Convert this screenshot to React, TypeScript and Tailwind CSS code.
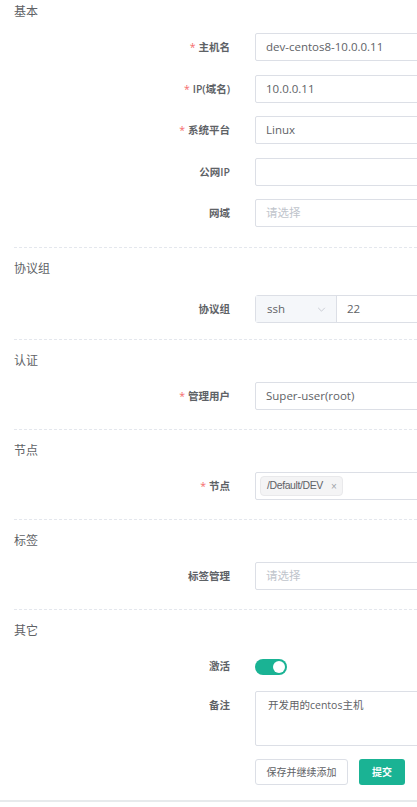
import { ReactNode } from 'react';

const font = { fontFamily: '"Open Sans", "Noto Sans CJK SC", sans-serif' };

const Label = ({ text, required }: { text: string; required?: boolean }) => (
  <div className="w-[230px] shrink-0 text-right text-[10.5px] font-semibold text-[#5e6266] leading-[28px]">
    {required && <span className="text-[#f56c6c] mr-[3px] font-normal">*</span>}
    {text}
  </div>
);

const Row = ({ label, required, children }: { label: string; required?: boolean; children: ReactNode }) => (
  <div className="flex items-start">
    <Label text={label} required={required} />
    <div className="ml-[25px] w-[400px] shrink-0">{children}</div>
  </div>
);

const Input = ({ value, placeholder }: { value?: string; placeholder?: string }) => (
  <div className="h-[28px] border border-[#dcdfe6] rounded-[2px] px-[10px] text-[11.5px] leading-[26px] bg-white">
    {value ? (
      <span className="text-[#606266]">{value}</span>
    ) : (
      <span className="text-[#c0c4cc]">{placeholder}</span>
    )}
  </div>
);

const Section = ({ title, first, children }: { title: string; first?: boolean; children: ReactNode }) => (
  <section className={first ? 'pt-[2px] pb-[20px]' : 'ml-[14px] border-t border-dashed border-[#e4e7ed] pt-[11px] pb-[19px]'}>
    <h3 className={`${first ? 'pl-[14px]' : '-ml-[14px] pl-[14px]'} h-[20px] leading-[20px] text-[12px] text-[#606266]`}>{title}</h3>
    <div className={`${first ? '' : '-ml-[14px]'} mt-[11px] flex flex-col gap-[13.5px]`}>{children}</div>
  </section>
);

export default function App() {
  return (
    <div className="w-[417px] h-[807px] overflow-hidden bg-white" style={font}>
      <Section title="基本" first>
        <Row label="主机名" required><Input value="dev-centos8-10.0.0.11" /></Row>
        <Row label="IP(域名)" required><Input value="10.0.0.11" /></Row>
        <Row label="系统平台" required><Input value="Linux" /></Row>
        <Row label="公网IP"><Input /></Row>
        <Row label="网域"><Input placeholder="请选择" /></Row>
      </Section>

      <Section title="协议组">
        <div className="mt-[5px] -mb-[3px]">
          <Row label="协议组">
            <div className="flex h-[28px] border border-[#dcdfe6] rounded-[3px] text-[11.5px] text-[#606266]">
              <div className="w-[81px] bg-[#f5f7fa] border-r border-[#dcdfe6] flex items-center justify-between pl-[11px] pr-[10px]">
                <span>ssh</span>
                <svg width="9" height="5" viewBox="0 0 10 6" fill="none" stroke="#c0c4cc" strokeWidth="1">
                  <path d="M1 1l4 4 4-4" />
                </svg>
              </div>
              <div className="flex items-center pl-[10px]">22</div>
            </div>
          </Row>
        </div>
      </Section>

      <Section title="认证">
        <Row label="管理用户" required><Input value="Super-user(root)" /></Row>
      </Section>

      <Section title="节点">
        <Row label="节点" required>
          <div className="h-[28px] border border-[#dcdfe6] rounded-[2px] flex items-center pl-[4px]">
            <span
              className="h-[20px] px-[6px] bg-[#f4f4f5] border border-[#e9e9eb] rounded-[4px] text-[10.5px] text-[#606266] flex items-center gap-[8px]"
              style={{ fontFamily: '"Liberation Sans", sans-serif', letterSpacing: '-0.4px' }}
            >
              /Default/DEV
              <span className="text-[#a0a3a8] text-[10px]">×</span>
            </span>
          </div>
        </Row>
      </Section>

      <Section title="标签">
        <Row label="标签管理"><Input placeholder="请选择" /></Row>
      </Section>

      <Section title="其它">
        <Row label="激活">
          <div className="h-[28px] flex items-center pt-[1px]">
            <div className="w-[32px] h-[16px] rounded-full bg-[#1ab394] flex items-center justify-end pr-[2px]">
              <div className="w-[12px] h-[12px] rounded-full bg-white" />
            </div>
          </div>
        </Row>
        <div className="-mt-[3px]">
          <Row label="备注">
            <div className="h-[55px] border border-[#dcdfe6] rounded-[2px] px-[12px] py-[3px] text-[10.5px] leading-[20px] text-[#606266]">
              开发用的centos主机
            </div>
          </Row>
        </div>
        <div className="flex ml-[255px]">
          <button className="h-[26px] w-[93px] border border-[#dcdfe6] rounded-[3px] bg-white text-[10px] text-[#606266]">保存并继续添加</button>
          <button className="h-[26px] w-[46px] ml-[11px] rounded-[3px] bg-[#1ab394] text-[10px] font-semibold text-white">提交</button>
        </div>
      </Section>
      <div className="-mt-[4px] border-t-2 border-[#e7eaec]" />
    </div>
  );
}
